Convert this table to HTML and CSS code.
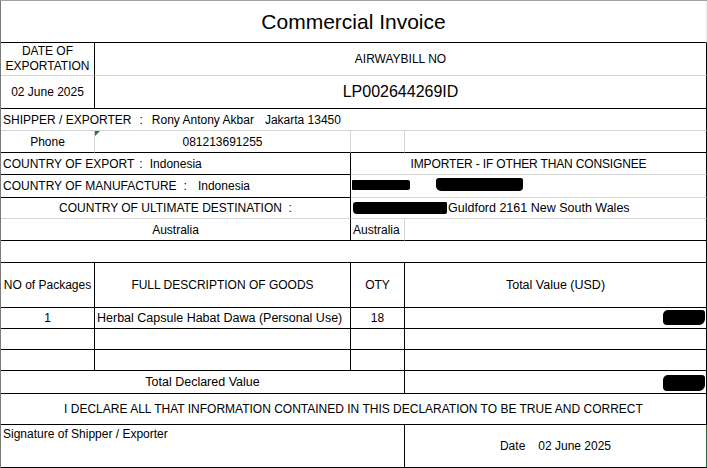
FILE: index.html
```html
<!DOCTYPE html>
<html>
<head>
<meta charset="UTF-8">
<title>Commercial Invoice</title>
<link rel="stylesheet" href="styles.css">
</head>
<body>
<div class="sheet">
	<!-- heading -->
	<div class="cell span4 center title r-faint">Commercial Invoice</div>

	<div class="cell center b-soft stacked">DATE OF<br>EXPORTATION</div>
	<div class="cell span3 center b-soft">AIRWAYBILL NO</div>

	<div class="cell center">02 June 2025</div>
	<div class="cell span3 center awb">LP002644269ID</div>

	<!-- shipper -->
	<div class="cell span4 b-soft">
		<span>SHIPPER / EXPORTER</span><span class="colon shipper-colon">:</span><span class="shipper-name">Rony Antony Akbar</span><span class="shipper-city">Jakarta 13450</span>
	</div>

	<div class="cell center r-soft">Phone</div>
	<div class="cell center r-soft note">081213691255</div>
	<div class="cell r-soft"></div>
	<div class="cell"></div>

	<!-- countries / importer -->
	<div class="cell span2">
		<span>COUNTRY OF EXPORT</span><span class="colon export-colon">:</span><span class="export-value">Indonesia</span>
	</div>
	<div class="cell span2 center b-soft narrow">IMPORTER - IF OTHER THAN CONSIGNEE</div>

	<div class="cell span2">
		<span>COUNTRY OF MANUFACTURE</span><span class="colon made-colon">:</span><span class="made-value">Indonesia</span>
	</div>
	<div class="cell span2 b-soft redacted-row">
		<span class="redact redact-name"></span><span class="redact redact-company"></span>
	</div>

	<div class="cell span2 center b-soft">COUNTRY OF ULTIMATE DESTINATION&nbsp; :</div>
	<div class="cell span2 b-soft address">
		<span class="redact redact-street"></span><span class="wide">Guldford 2161 New South Wales</span>
	</div>

	<div class="cell span2 center">Australia</div>
	<div class="cell r-soft">Australia</div>
	<div class="cell"></div>

	<div class="cell span4"></div>

	<!-- goods -->
	<div class="cell center">NO of Packages</div>
	<div class="cell center">FULL DESCRIPTION OF GOODS</div>
	<div class="cell center">OTY</div>
	<div class="cell center wide">Total Value (USD)</div>

	<div class="cell center">1</div>
	<div class="cell wide">Herbal Capsule Habat Dawa (Personal Use)</div>
	<div class="cell center">18</div>
	<div class="cell right"><span class="redact redact-value"></span></div>

	<div class="cell"></div>
	<div class="cell"></div>
	<div class="cell"></div>
	<div class="cell"></div>

	<div class="cell"></div>
	<div class="cell"></div>
	<div class="cell"></div>
	<div class="cell"></div>

	<div class="cell span3 center wide">Total Declared Value</div>
	<div class="cell right"><span class="redact redact-value total"></span></div>

	<div class="cell span4 center">I DECLARE ALL THAT INFORMATION CONTAINED IN THIS DECLARATION TO BE TRUE AND CORRECT</div>

	<!-- signature -->
	<div class="cell span3 top">Signature of Shipper / Exporter</div>
	<div class="cell center r-selected"><span>Date</span><span class="date-value">02 June 2025</span></div>
</div>
</body>
</html>
```

FILE: styles.css
```css
body {
  margin: 0;
  background: #fff;
  color: #000;
  font-family: "Liberation Sans", Arial, sans-serif;
  font-size: 12px;
}

.sheet {
  display: grid;
  width: 706px;
  grid-template-columns: 94px 256px 54px 302px;
  grid-template-rows: 42px 33px 33px 22px 22px 22px 23px 21px 22px 22px 45px 21px 21px 21px 23px 31px 43px;
  border-top: 1px solid #a3a3a3;
  border-left: 1px solid #7a7a7a;
}

.cell {
  box-sizing: border-box;
  display: flex;
  align-items: center;
  padding: 0 2px;
  border-right: 1px solid #000;
  border-bottom: 1px solid #000;
  white-space: nowrap;
  position: relative;
}

.span2 { grid-column: span 2; }
.span3 { grid-column: span 3; }
.span4 { grid-column: span 4; }

.center {
  justify-content: center;
  text-align: center;
}

.right {
  justify-content: flex-end;
  padding-right: 1px;
}

.top {
  align-items: flex-start;
  padding-top: 2px;
}

/* gridline colours */
.r-soft { border-right-color: #d4d4d4; }
.b-soft { border-bottom-color: #d4d4d4; }
.r-faint { border-right-color: #ececec; }
.r-selected { border-right-color: #2f5e3c; }

.title {
  font-size: 21px;
}

.awb {
  font-size: 16px;
}

.stacked {
  line-height: 15px;
}

.wide { font-size: 12.5px; }
.narrow { letter-spacing: -0.15px; }

.colon { display: inline-block; }
.shipper-colon { margin-left: 8px; }
.shipper-name { margin-left: 9px; }
.shipper-city { margin-left: 11px; }
.export-colon { margin-left: 5px; }
.export-value { margin-left: 7px; }
.made-colon { margin-left: 7px; }
.made-value { margin-left: 11px; }
.date-value { margin-left: 13px; }

/* comment marker on phone number */
.note::before {
  content: "";
  position: absolute;
  left: 0;
  top: 0;
  border-top: 5px solid #1f7a2e;
  border-right: 5px solid transparent;
}

/* blacked out details */
.redact {
  display: inline-block;
  background: #000;
}

.redacted-row {
  padding-left: 1px;
}

.redact-name {
  width: 58px;
  height: 10px;
  margin-top: -3px;
  border-radius: 1px 2px 2px 1px;
}

.redact-company {
  width: 87px;
  height: 13px;
  margin-left: 26px;
  margin-top: -3px;
  border-radius: 3px 2px 4px 5px;
}

.address {
  padding-left: 2px;
}

.redact-street {
  width: 94px;
  height: 12px;
  margin-right: 1px;
  border-radius: 3px 1px 2px 4px;
}

.redact-value {
  width: 42px;
  height: 15px;
  margin-top: -1px;
  border-radius: 5px 3px 6px 4px;
}

.redact-value.total {
  height: 16px;
  margin-top: 2px;
}
```
